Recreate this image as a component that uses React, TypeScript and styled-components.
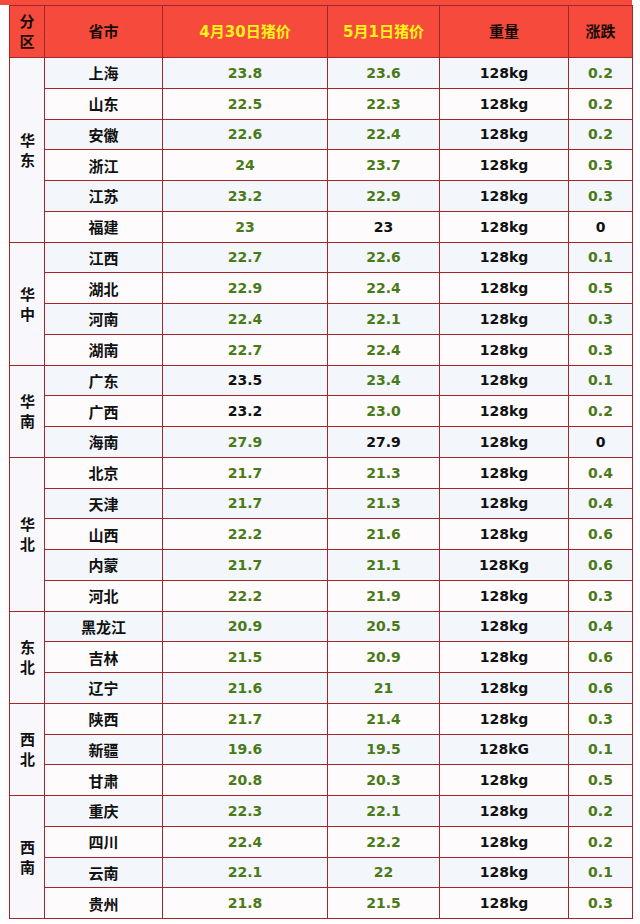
import React from "react";
import styled, { createGlobalStyle } from "styled-components";

const Global = createGlobalStyle`
  html, body { margin: 0; padding: 0; background: #ffffff; }
  body { font-family: "DejaVu Sans", "Noto Sans CJK SC", sans-serif; }
`;

const RED = "#f64b3c";
const LINE = "#a3262a";
const GREEN = "#4a7a18";

type Row = { p: string; a: string; b: string; w?: string; d: string; ac?: boolean; bc?: boolean; dc?: boolean };
type Region = { name: string; rows: Row[] };

const data: Region[] = [
  {
    name: "华东",
    rows: [
      { p: "上海", a: "23.8", b: "23.6", d: "0.2" },
      { p: "山东", a: "22.5", b: "22.3", d: "0.2" },
      { p: "安徽", a: "22.6", b: "22.4", d: "0.2" },
      { p: "浙江", a: "24", b: "23.7", d: "0.3" },
      { p: "江苏", a: "23.2", b: "22.9", d: "0.3" },
      { p: "福建", a: "23", b: "23", d: "0", bc: true, dc: true },
    ],
  },
  {
    name: "华中",
    rows: [
      { p: "江西", a: "22.7", b: "22.6", d: "0.1" },
      { p: "湖北", a: "22.9", b: "22.4", d: "0.5" },
      { p: "河南", a: "22.4", b: "22.1", d: "0.3" },
      { p: "湖南", a: "22.7", b: "22.4", d: "0.3" },
    ],
  },
  {
    name: "华南",
    rows: [
      { p: "广东", a: "23.5", b: "23.4", d: "0.1", ac: true },
      { p: "广西", a: "23.2", b: "23.0", d: "0.2", ac: true },
      { p: "海南", a: "27.9", b: "27.9", d: "0", bc: true, dc: true },
    ],
  },
  {
    name: "华北",
    rows: [
      { p: "北京", a: "21.7", b: "21.3", d: "0.4" },
      { p: "天津", a: "21.7", b: "21.3", d: "0.4" },
      { p: "山西", a: "22.2", b: "21.6", d: "0.6" },
      { p: "内蒙", a: "21.7", b: "21.1", w: "128Kg", d: "0.6" },
      { p: "河北", a: "22.2", b: "21.9", d: "0.3" },
    ],
  },
  {
    name: "东北",
    rows: [
      { p: "黑龙江", a: "20.9", b: "20.5", d: "0.4" },
      { p: "吉林", a: "21.5", b: "20.9", d: "0.6" },
      { p: "辽宁", a: "21.6", b: "21", d: "0.6" },
    ],
  },
  {
    name: "西北",
    rows: [
      { p: "陕西", a: "21.7", b: "21.4", d: "0.3" },
      { p: "新疆", a: "19.6", b: "19.5", w: "128kG", d: "0.1" },
      { p: "甘肃", a: "20.8", b: "20.3", d: "0.5" },
    ],
  },
  {
    name: "西南",
    rows: [
      { p: "重庆", a: "22.3", b: "22.1", d: "0.2" },
      { p: "四川", a: "22.4", b: "22.2", d: "0.2" },
      { p: "云南", a: "22.1", b: "22", d: "0.1" },
      { p: "贵州", a: "21.8", b: "21.5", d: "0.3" },
    ],
  },
];

const Page = styled.div`
  width: 640px;
  height: 924px;
  overflow: hidden;
`;

const TopStrip = styled.div`
  width: 632px;
  height: 5px;
  background: ${RED};
`;

const Wrap = styled.div`
  padding-left: 9px;
`;

const Table = styled.table`
  border-collapse: collapse;
  table-layout: fixed;
  width: 623px;
  border: 1.5px solid ${LINE};
`;

const HeadCell = styled.th<{ $yellow?: boolean }>`
  height: 51px;
  padding: 0;
  background: ${RED};
  border: 1px solid ${LINE};
  color: ${(p) => (p.$yellow ? "#fff21a" : "#1a0a08")};
  font-family: "DejaVu Sans", "Noto Sans CJK SC", sans-serif;
  font-size: 15px;
  font-weight: 700;
  text-align: center;
  vertical-align: middle;
  line-height: 20px;
`;

const DataRow = styled.tr<{ $alt: boolean }>`
  height: 30.75px;
  background: ${(p) => (p.$alt ? "#fdfbfb" : "#f3f6fb")};
`;

const RegionCell = styled.td`
  padding: 0 0 0 1px;
  background: #f8f8fc;
  border: 1px solid ${LINE};
  text-align: center;
  vertical-align: middle;
  font-family: "Noto Sans CJK SC", sans-serif;
  font-size: 15px;
  font-weight: 700;
  line-height: 20px;
  color: #111;
`;

const NameCell = styled.td`
  padding: 0;
  border: 1px solid ${LINE};
  text-align: center;
  vertical-align: middle;
  font-family: "Noto Sans CJK SC", sans-serif;
  font-size: 15px;
  font-weight: 700;
  color: #111;
`;

const NumCell = styled.td<{ $black?: boolean }>`
  padding: 0;
  border: 1px solid ${LINE};
  text-align: center;
  vertical-align: middle;
  font-family: "DejaVu Sans", sans-serif;
  font-size: 14px;
  font-weight: 700;
  color: ${(p) => (p.$black ? "#111111" : GREEN)};
`;

const Stack = styled.span`
  display: inline-block;
  width: 1em;
  word-break: break-all;
`;

export default function App() {
  let idx = 0;
  return (
    <Page>
      <Global />
      <TopStrip />
      <Wrap>
        <Table>
          <colgroup>
            <col style={{ width: 35 }} />
            <col style={{ width: 118 }} />
            <col style={{ width: 165 }} />
            <col style={{ width: 112 }} />
            <col style={{ width: 129 }} />
            <col style={{ width: 64 }} />
          </colgroup>
          <thead>
            <tr>
              <HeadCell>
                <Stack>分区</Stack>
              </HeadCell>
              <HeadCell>省市</HeadCell>
              <HeadCell $yellow>4月30日猪价</HeadCell>
              <HeadCell $yellow>5月1日猪价</HeadCell>
              <HeadCell>重量</HeadCell>
              <HeadCell>涨跌</HeadCell>
            </tr>
          </thead>
          <tbody>
            {data.map((region) =>
              region.rows.map((r, i) => {
                const alt = idx % 2 === 1;
                idx += 1;
                return (
                  <DataRow key={region.name + r.p} $alt={alt}>
                    {i === 0 && (
                      <RegionCell rowSpan={region.rows.length}>
                        <Stack>{region.name}</Stack>
                      </RegionCell>
                    )}
                    <NameCell>{r.p}</NameCell>
                    <NumCell $black={r.ac}>{r.a}</NumCell>
                    <NumCell $black={r.bc}>{r.b}</NumCell>
                    <NumCell $black>{r.w ?? "128kg"}</NumCell>
                    <NumCell $black={r.dc}>{r.d}</NumCell>
                  </DataRow>
                );
              })
            )}
          </tbody>
        </Table>
      </Wrap>
    </Page>
  );
}
